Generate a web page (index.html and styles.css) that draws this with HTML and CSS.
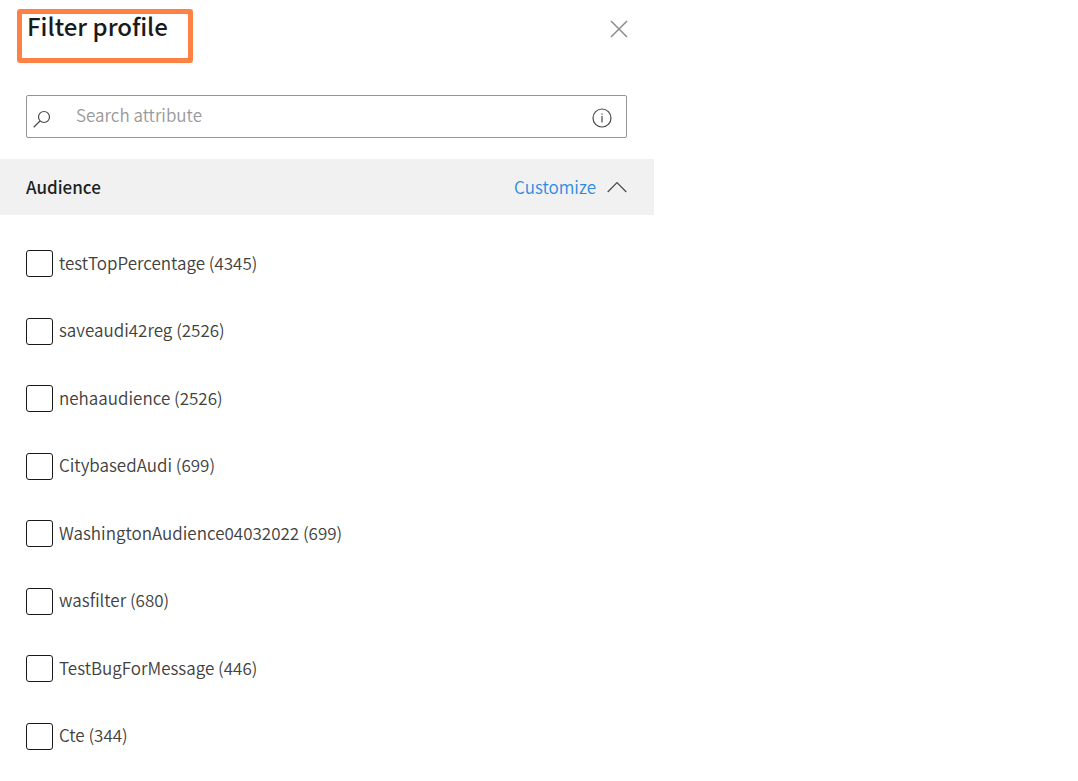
FILE: index.html
```html
<!DOCTYPE html>
<html lang="en">
<head>
<meta charset="utf-8">
<meta name="viewport" content="width=device-width, initial-scale=1">
<title>Filter profile</title>
<link rel="stylesheet" href="styles.css">
</head>
<body>
<main class="panel">
  <header class="panel-header">
    <h1 class="title">Filter profile</h1>
    <button class="icon-button close" type="button" aria-label="Close">
      <svg width="18" height="18" viewBox="0 0 18 18"><path d="M1 1 17 17M17 1 1 17"/></svg>
    </button>
  </header>
  <div class="search">
    <svg class="search-icon" width="18" height="18" viewBox="0 0 18 18"><circle cx="11" cy="7" r="5.5"/><path d="M7 11 .7 17.2"/></svg>
    <input class="search-input" type="text" placeholder="Search attribute" aria-label="Search attribute">
    <button class="icon-button info" type="button" aria-label="Search help">
      <svg width="20" height="20" viewBox="0 0 20 20"><circle cx="10" cy="10" r="9"/><path d="M10 8v6.500M10 5.500v1.300"/></svg>
    </button>
  </div>
  <section class="group">
    <div class="group-header">
      <h2 class="group-title">Audience</h2>
      <a class="customize" href="#customize">Customize</a>
      <button class="icon-button collapse" type="button" aria-label="Collapse Audience" aria-expanded="true">
        <svg width="20" height="12" viewBox="0 0 20 12"><path d="M.7 11 10 1.500 19.300 11"/></svg>
      </button>
    </div>
    <div class="options">
      <label class="option"><input class="box" type="checkbox"><span class="name">testTopPercentage (4345)</span></label>
      <label class="option"><input class="box" type="checkbox"><span class="name">saveaudi42reg (2526)</span></label>
      <label class="option"><input class="box" type="checkbox"><span class="name">nehaaudience (2526)</span></label>
      <label class="option"><input class="box" type="checkbox"><span class="name">CitybasedAudi (699)</span></label>
      <label class="option"><input class="box" type="checkbox"><span class="name">WashingtonAudience04032022 (699)</span></label>
      <label class="option"><input class="box" type="checkbox"><span class="name">wasfilter (680)</span></label>
      <label class="option"><input class="box" type="checkbox"><span class="name">TestBugForMessage (446)</span></label>
      <label class="option"><input class="box" type="checkbox"><span class="name">Cte (344)</span></label>
    </div>
  </section>
</main>
</body>
</html>
```
FILE: styles.css
```css
* {
  box-sizing: border-box;
}

body {
  margin: 0;
  background: #fff;
  color: #414141;
  font: 350 17px/24px "Noto Sans CJK SC", "Noto Sans", sans-serif;
}

.panel {
  display: flex;
  flex-direction: column;
  width: 100%;
  max-width: 654px;
  min-height: 100vh;
}

.panel-header {
  display: flex;
  justify-content: space-between;
  align-items: flex-start;
  padding: 9px 26px 0 17px;
}

.title {
  margin: 0;
  padding: 0 20px 20px 5px;
  border: 5px solid #ff8244;
  border-radius: 3px;
  color: #1a1a1a;
  font-size: 24px;
  font-weight: 500;
  line-height: 24px;
}

.icon-button {
  display: flex;
  padding: 0;
  border: 0;
  background: none;
  cursor: pointer;
}

svg {
  fill: none;
  stroke: #4a4a4a;
  stroke-width: 1.2;
}

.close {
  margin-top: 11px;
}

.close svg {
  stroke: #8b8b8b;
  stroke-width: 1.5;
}

.search {
  display: flex;
  align-items: center;
  height: 43px;
  margin: 32px 27px 21px 26px;
  padding: 0 14px 0 6px;
  border: 1px solid #949494;
  border-radius: 2px;
}

.search-icon {
  flex: none;
  margin-top: 4px;
}

.search-input {
  flex: 1;
  min-width: 0;
  padding: 0 25px 4px;
  border: 0;
  outline: 0;
  background: none;
  color: #414141;
  font: inherit;
}

.search-input::placeholder {
  color: #999;
  opacity: 1;
}

.info {
  margin-top: 2px;
}

.group {
  display: flex;
  flex: 1;
  flex-direction: column;
}

.group-header {
  display: flex;
  align-items: center;
  height: 56px;
  padding: 0 27px 0 26px;
  background: #f1f1f1;
}

.group-title {
  margin: 0 auto 0 0;
  color: #1f1f1f;
  font-size: 17px;
  font-weight: 500;
}

.customize {
  margin-right: 11px;
  color: #2a8be2;
  text-decoration: none;
}

.options {
  display: flex;
  flex: 1;
  flex-direction: column;
  padding: 15px 26px 11px;
}

.option {
  display: flex;
  flex: 1;
  align-items: center;
  gap: 6px;
}

.name {
  padding-bottom: 2px;
}

.box {
  flex: none;
  width: 27px;
  height: 27px;
  margin: 0;
  border: 1px solid #1a1a1a;
  border-radius: 3px;
  background: #fff;
  appearance: none;
}

.box:checked {
  background: #2a8be2;
}
```
